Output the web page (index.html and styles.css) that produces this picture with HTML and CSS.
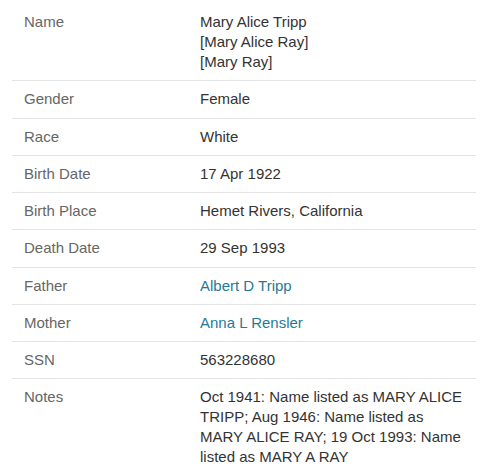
FILE: index.html
```html
<!DOCTYPE html>
<html>
<head>
<meta charset="utf-8">
<link rel="stylesheet" href="styles.css">
</head>
<body>
<div class="facts">
  <div class="row">
    <div class="label">Name</div>
    <div class="value">Mary Alice Tripp<br>[Mary Alice Ray]<br>[Mary Ray]</div>
  </div>
  <div class="row">
    <div class="label">Gender</div>
    <div class="value">Female</div>
  </div>
  <div class="row">
    <div class="label">Race</div>
    <div class="value">White</div>
  </div>
  <div class="row">
    <div class="label">Birth Date</div>
    <div class="value">17 Apr 1922</div>
  </div>
  <div class="row">
    <div class="label">Birth Place</div>
    <div class="value">Hemet Rivers, California</div>
  </div>
  <div class="row">
    <div class="label">Death Date</div>
    <div class="value">29 Sep 1993</div>
  </div>
  <div class="row">
    <div class="label">Father</div>
    <div class="value"><a class="link" href="#">Albert D Tripp</a></div>
  </div>
  <div class="row">
    <div class="label">Mother</div>
    <div class="value"><a class="link" href="#">Anna L Rensler</a></div>
  </div>
  <div class="row">
    <div class="label">SSN</div>
    <div class="value">563228680</div>
  </div>
  <div class="row last">
    <div class="label">Notes</div>
    <div class="value">Oct 1941: Name listed as MARY ALICE TRIPP; Aug 1946: Name listed as MARY ALICE RAY; 19 Oct 1993: Name listed as MARY A RAY</div>
  </div>
</div>
</body>
</html>
```

FILE: styles.css
```css
html, body {
  margin: 0;
  padding: 0;
  background: #ffffff;
}

body {
  font-family: "Liberation Sans", Arial, Helvetica, sans-serif;
  font-size: 15px;
  line-height: 20px;
  color: #333333;
}

.facts {
  margin: 0 5px 0 12px;
  padding-top: 4px;
}

.row {
  display: grid;
  grid-template-columns: 188px 1fr;
  padding: 8px 0 8.25px;
  border-bottom: 1px solid #e4e4e4;
}

.row.last {
  border-bottom: none;
}

.label {
  padding-left: 12px;
  color: #666666;
}

.value {
  padding-right: 8px;
  color: #333333;
}

.link {
  color: #1f7a98;
  text-decoration: none;
}
```
